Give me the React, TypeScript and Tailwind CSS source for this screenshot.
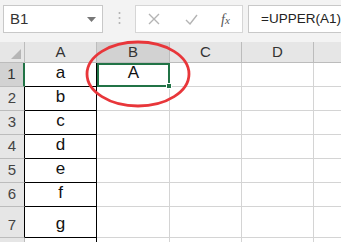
import React from "react";

const rows = [
  { n: "1", a: "a", h: 24 },
  { n: "2", a: "b", h: 24 },
  { n: "3", a: "c", h: 24 },
  { n: "4", a: "d", h: 24 },
  { n: "5", a: "e", h: 24 },
  { n: "6", a: "f", h: 24 },
  { n: "7", a: "g", h: 31 },
  { n: "", a: "", h: 24 },
];

const cols = ["A", "B", "C", "D", ""];

export default function App() {
  return (
    <div
      className="relative h-[242px] w-[341px] overflow-hidden bg-white"
      style={{ fontFamily: "'Liberation Sans', Arial, sans-serif" }}
    >
      {/* formula bar */}
      <div className="flex h-[42px] items-start bg-[#f3f3f3] pt-[5px]">
        <div className="ml-[3px] flex h-[28px] w-[100px] shrink-0 items-center justify-between border border-[#c8c8c8] bg-white pl-[6px] pr-[6px] text-[15px] text-[#333]">
          <span>B1</span>
          <svg width="9" height="5" viewBox="0 0 9 5">
            <path d="M0 0h9L4.5 5z" fill="#777" />
          </svg>
        </div>
        <div className="flex w-[32px] shrink-0 items-center justify-center pt-[6px]">
          <svg width="3" height="14" viewBox="0 0 3 14">
            <circle cx="1.5" cy="2" r="1" fill="#b0b0b0" />
            <circle cx="1.5" cy="7" r="1" fill="#b0b0b0" />
            <circle cx="1.5" cy="12" r="1" fill="#b0b0b0" />
          </svg>
        </div>
        <div className="flex h-[28px] w-[108px] shrink-0 items-center border border-[#d6d6d6] bg-white">
          <svg width="12" height="12" viewBox="0 0 12 12" className="ml-[12px]">
            <path d="M1 1l10 10M11 1L1 11" stroke="#b4b4b4" strokeWidth="1.4" />
          </svg>
          <svg width="13" height="11" viewBox="0 0 13 11" className="ml-[25px]">
            <path d="M1 6l4 4 7-9" stroke="#b4b4b4" strokeWidth="1.4" fill="none" />
          </svg>
          <span className="ml-[23px] text-[14px] italic text-[#555]" style={{ fontFamily: "'Liberation Serif', serif" }}>
            f<span className="text-[11px]">x</span>
          </span>
        </div>
        <div className="ml-[5px] flex h-[28px] min-w-0 flex-1 items-center overflow-hidden whitespace-nowrap border border-r-0 border-[#c8c8c8] bg-white pl-[12px] text-[13.5px] text-[#222]">
          =UPPER(A1)
        </div>
      </div>

      {/* sheet */}
      <div className="grid grid-cols-[25px_72px_73px_72px_72px_47px]">
        {/* header row */}
        <div className="relative h-[21px] border-b border-r border-[#bcbcbc] bg-[#e6e6e6]">
          <svg width="10" height="10" viewBox="0 0 10 10" className="absolute bottom-[3px] right-[3px]">
            <path d="M10 0v10H0z" fill="#b6b6b6" />
          </svg>
        </div>
        {cols.map((c) => (
          <div
            key={c || "e"}
            className={
              c === "B"
                ? "flex h-[21px] items-center justify-center border-b border-r border-[#bcbcbc] bg-[#d2d2d2] text-[15px] text-[#333]"
                : "flex h-[21px] items-center justify-center border-b border-r border-[#bcbcbc] bg-[#e6e6e6] text-[15px] text-[#333]"
            }
          >
            {c}
          </div>
        ))}

        {rows.map((r, i) => (
          <React.Fragment key={i}>
            <div
              style={{ height: r.h }}
              className={
                r.n === "1"
                  ? "flex items-end justify-center border-b border-r-2 border-b-[#bcbcbc] border-r-[#217346] bg-[#d2d2d2] pb-[1px] text-[15px] text-[#333]"
                  : r.n
                  ? "flex items-end justify-center border-b border-r border-b-[#bcbcbc] border-r-black bg-[#e6e6e6] pb-[1px] text-[15px] text-[#444]"
                  : "border-r border-[#bcbcbc] bg-[#e6e6e6]"
              }
            >
              {r.n}
            </div>
            <div
              style={{ height: r.h }}
              className={
                r.a
                  ? "flex items-end justify-center border-b border-r border-black pb-[1px] text-[17px] text-[#111]"
                  : "border-r border-black"
              }
            >
              {r.a}
            </div>
            <div
              style={{ height: r.h }}
              className={
                r.n === "1"
                  ? "relative flex items-end justify-center border-2 border-[#217346] text-[17px] text-[#111]"
                  : "border-b border-r border-[#d4d4d4]"
              }
            >
              {r.n === "1" && (
                <>
                  A
                  <span className="absolute bottom-[-4px] right-[-4px] h-[6px] w-[6px] border border-white bg-[#217346]" />
                </>
              )}
            </div>
            <div style={{ height: r.h }} className="border-b border-r border-[#d4d4d4]" />
            <div style={{ height: r.h }} className="border-b border-r border-[#d4d4d4]" />
            <div style={{ height: r.h }} className="border-b border-[#d4d4d4]" />
          </React.Fragment>
        ))}
      </div>

      {/* red hand-drawn circle */}
      <svg width="341" height="242" viewBox="0 0 341 242" className="pointer-events-none absolute left-0 top-0">
        <ellipse cx="138" cy="74" rx="51" ry="32" fill="none" stroke="#e8363a" strokeWidth="2.8" />
      </svg>
    </div>
  );
}
